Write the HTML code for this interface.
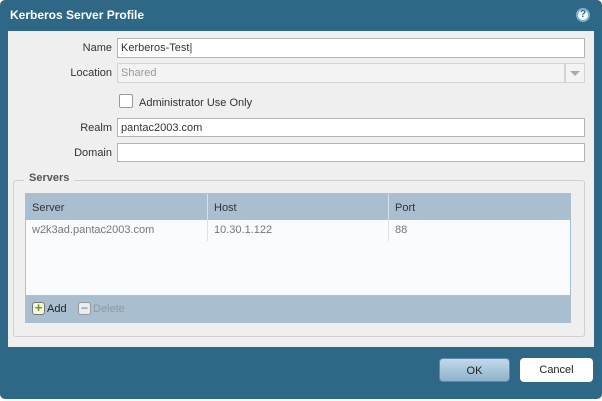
<!DOCTYPE html><html><head><style>
*{box-sizing:border-box;margin:0;padding:0}
body{width:602px;height:401px;background:#fff;font-family:"Liberation Sans",sans-serif;font-size:11px;color:#333;position:relative;overflow:hidden}
.dlg{position:absolute;left:0;top:0;width:602px;height:399px;background:#2f6886;border-radius:5px}
.title{position:absolute;left:10px;top:8px;color:#fff;font-weight:bold;font-size:12px}
.help{position:absolute;left:576px;top:8px;width:14px;height:14px;border-radius:50%;background:#fff;border:2px solid #7ab0d8;color:#2f6886;font-weight:bold;font-size:10px;text-align:center;line-height:10px}
.panel{position:absolute;left:8px;top:31px;width:586px;height:316px;background:#efefef}
.lbl{position:absolute;width:105px;text-align:right;left:7px;font-size:11px;color:#333}
.in{position:absolute;left:117px;width:468px;height:20px;background:#fff;border:1px solid #b5b5b5;padding:3px 3px;font-size:11px}
.dis{background:#f3f3f3;color:#999;border-color:#d4d4d4}
.fs{position:absolute;left:13px;top:180px;width:572px;height:157px;border:1px solid #d0d0d0;border-radius:3px}
.leg{position:absolute;left:24px;top:172px;background:#efefef;padding:0 5px;font-weight:bold;color:#555;font-size:11px}
.tbl{position:absolute;left:25px;top:193px;width:546px;height:130px;background:#f9fbfc;border:1px solid #a9bfcf}
.hd{position:absolute;left:0;top:0;width:544px;height:26px;background:#a9bfcf}
.c{position:absolute;font-size:11px}
.tb{position:absolute;left:0;bottom:0;width:544px;height:27px;background:#a9bfcf}
.btn{position:absolute;top:358px;height:24px;border-radius:4px;text-align:center;line-height:24px;font-size:11px}
</style></head><body>
<div class="dlg"></div>
<div class="title">Kerberos Server Profile</div>
<div class="help">?</div>
<div class="panel"></div>
<div class="lbl" style="top:42px">Name</div>
<div class="in" style="top:38px">Kerberos-Test|</div>
<div class="lbl" style="top:67px">Location</div>
<div class="in dis" style="top:63px;width:448px">Shared</div>
<div class="in dis" style="top:63px;left:565px;width:20px;"><div style="position:absolute;left:4px;top:7px;border-left:5px solid transparent;border-right:5px solid transparent;border-top:5px solid #aaa"></div></div>
<div style="position:absolute;left:119px;top:94px;width:14px;height:14px;border:1px solid #999;border-radius:2px;background:#fff"></div>
<div class="c" style="left:139px;top:97px">Administrator Use Only</div>
<div class="lbl" style="top:122px">Realm</div>
<div class="in" style="top:118px;height:19px">pantac2003.com</div>
<div class="lbl" style="top:147px">Domain</div>
<div class="in" style="top:143px;height:19px"></div>
<div class="fs"></div>
<div class="leg">Servers</div>
<div class="tbl">
<div class="hd"></div>
<div style="position:absolute;left:181px;top:0;width:1px;height:47px;background:#d8e2ea"></div>
<div style="position:absolute;left:362px;top:0;width:1px;height:47px;background:#d8e2ea"></div>
<div class="c" style="left:6px;top:8px">Server</div>
<div class="c" style="left:188px;top:8px">Host</div>
<div class="c" style="left:369px;top:8px">Port</div>
<div class="c" style="left:6px;top:30px;color:#777">w2k3ad.pantac2003.com</div>
<div class="c" style="left:188px;top:30px;color:#777">10.30.1.122</div>
<div class="c" style="left:369px;top:30px;color:#777">88</div>
<div class="tb">
<div style="position:absolute;left:6px;top:7px;width:13px;height:13px;border:1px solid #777;border-radius:3px;background:#f4f4e0;color:#6a9a10;font-weight:bold;font-size:13px;line-height:10px;text-align:center">+</div>
<div class="c" style="left:21px;top:8px;color:#222">Add</div>
<div style="position:absolute;left:52px;top:7px;width:13px;height:13px;border:1px solid #999;border-radius:3px;background:#e6ecf0;color:#999;font-weight:bold;font-size:12px;line-height:10px;text-align:center">−</div>
<div class="c" style="left:67px;top:8px;color:#8a9aa6">Delete</div>
</div></div>
<div class="btn" style="left:439px;width:71px;background:linear-gradient(#c3d9e9,#8eb2cb);border:1px solid #5d8aa8;color:#222">OK</div>
<div class="btn" style="left:520px;width:73px;background:#fff;color:#222">Cancel</div>
</body></html>
